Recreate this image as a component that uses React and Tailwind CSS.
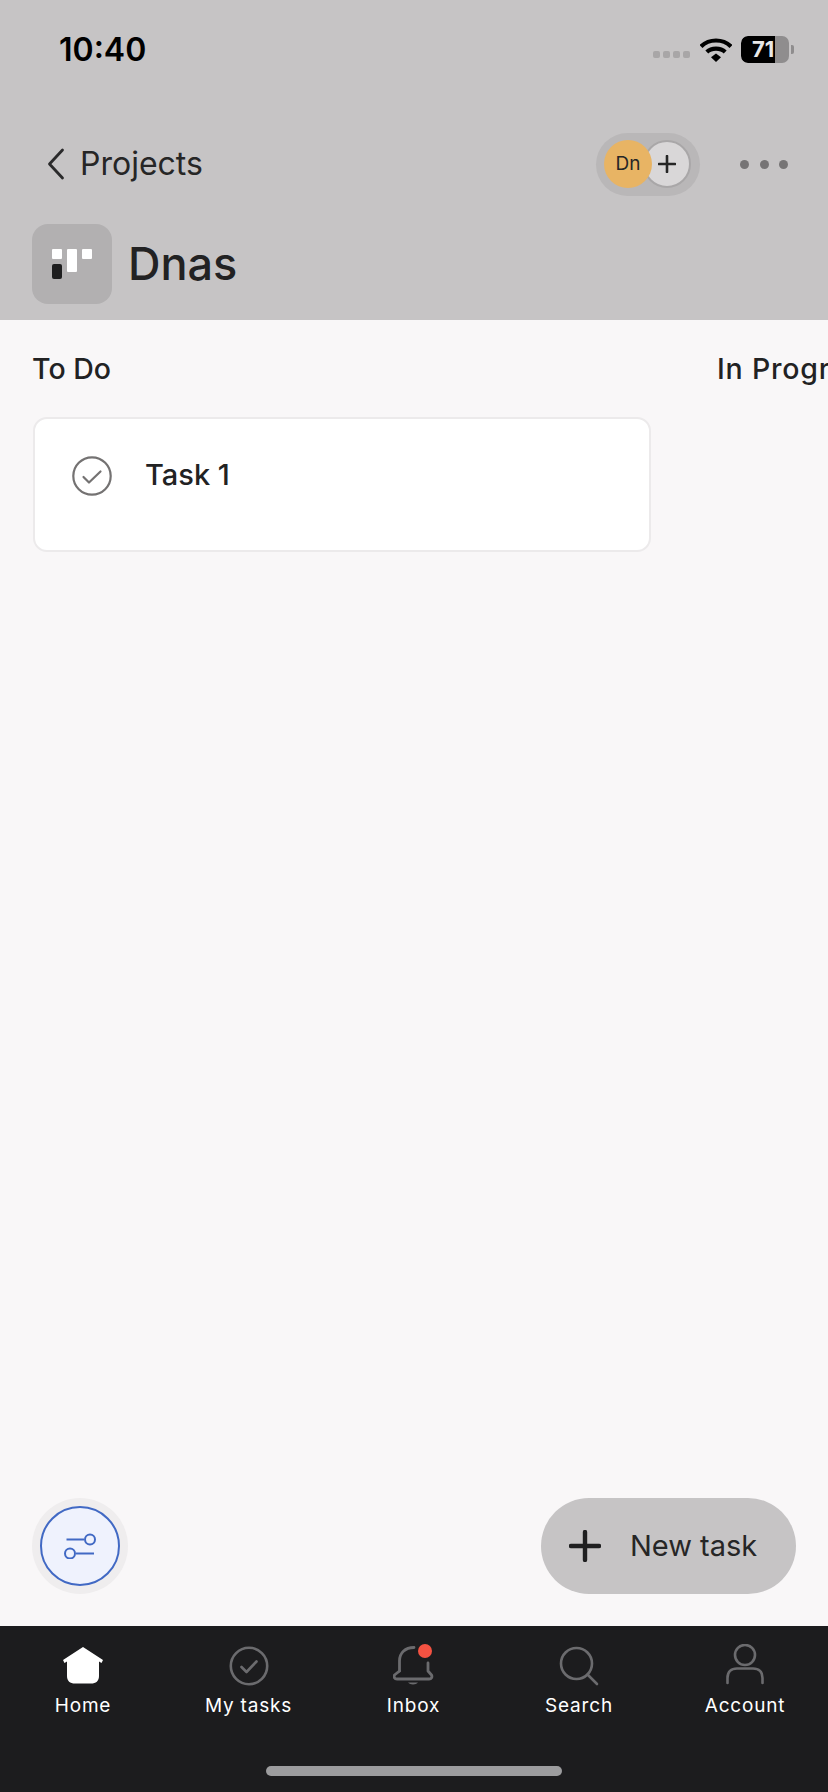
import React from "react";

const font = { fontFamily: "Inter, 'Noto Sans', sans-serif" };

function StatusBar() {
  return (
    <div className="h-[118px] pl-[59px] pr-[34px] flex items-start justify-between">
      <span className="mt-[30px] text-[32px] leading-[40px] font-semibold text-black">10:40</span>
      <div className="mt-[36px] flex items-center">
        <div className="mt-[9px] mr-[10px] flex gap-[3px]">
          <span className="w-[7px] h-[7px] rounded-[2px] bg-[#a8a6a7]" />
          <span className="w-[7px] h-[7px] rounded-[2px] bg-[#a8a6a7]" />
          <span className="w-[7px] h-[7px] rounded-[2px] bg-[#a8a6a7]" />
          <span className="w-[7px] h-[7px] rounded-[2px] bg-[#a8a6a7]" />
        </div>
        <svg width="32" height="26" viewBox="0 0 32 26" className="mr-[9px]">
          <path d="M1 9.5C9 1.5 23 1.5 31 9.5" fill="none" stroke="#000" strokeWidth="4.2" />
          <path d="M6.8 15C11.5 10.5 20.5 10.5 25.2 15" fill="none" stroke="#000" strokeWidth="4.2" />
          <path d="M11 20.2L16 16.5L21 20.2L16 25Z" fill="#000" />
        </svg>
        <div className="relative w-[48px] h-[27px] rounded-[7px] overflow-hidden bg-[#8f8d8e]">
          <div className="w-[34px] h-full bg-black rounded-l-[7px]" />
          <span className="absolute left-[11px] top-0 text-[22px] leading-[27px] font-bold text-[#e8e8e8]">71</span>
        </div>
        <span className="ml-[2px] w-[3px] h-[9px] rounded-r-[2px] bg-[#8f8d8e]" />
      </div>
    </div>
  );
}

function NavRow() {
  return (
    <div className="h-[92px] pl-[47px] pr-[40px] flex items-center justify-between">
      <div className="flex items-center">
        <svg width="18" height="32" viewBox="0 0 18 32" fill="none" className="mr-[15px]">
          <path d="M15.5 2L2.5 16L15.5 30" stroke="#2a2a2b" strokeWidth="2.8" strokeLinecap="round" strokeLinejoin="round" />
        </svg>
        <span className="text-[32px] leading-[40px] text-[#262626]">Projects</span>
      </div>
      <div className="flex items-center gap-[40px]">
        <div className="w-[104px] h-[63px] rounded-full bg-[#b9b7b8] pl-[8px] flex items-center">
          <div className="z-10 w-[48px] h-[48px] rounded-full bg-[#e8b464] flex items-center justify-center text-[19px] text-[#262626]">Dn</div>
          <div className="-ml-[9px] w-[48px] h-[48px] rounded-full bg-[#d9d7d8] border-2 border-[#a9a7a8] flex items-center justify-center">
            <svg width="18" height="18" viewBox="0 0 18 18">
              <path d="M9 1V17M1 9H17" stroke="#262626" strokeWidth="2.6" strokeLinecap="round" />
            </svg>
          </div>
        </div>
        <div className="flex gap-[10.5px]">
          <span className="w-[9px] h-[9px] rounded-full bg-[#767475]" />
          <span className="w-[9px] h-[9px] rounded-full bg-[#767475]" />
          <span className="w-[9px] h-[9px] rounded-full bg-[#767475]" />
        </div>
      </div>
    </div>
  );
}

function TitleRow() {
  return (
    <div className="h-[110px] pl-[32px] pt-[14px] flex items-start">
      <div className="w-[80px] h-[80px] rounded-[16px] bg-[#b2b0b1] flex items-center justify-center">
        <svg width="42" height="32" viewBox="0 0 42 32">
          <rect x="1" y="1" width="10" height="10" rx="1" fill="#fff" />
          <rect x="16" y="1" width="10" height="23" rx="1" fill="#fff" />
          <rect x="31" y="1" width="10" height="10" rx="1" fill="#fff" />
          <rect x="1" y="16" width="10" height="15" rx="2" fill="#1e1e1f" />
        </svg>
      </div>
      <span className="ml-[16px] mt-[12px] text-[45px] leading-[56px] font-medium text-[#222223]">Dnas</span>
    </div>
  );
}

function Board() {
  return (
    <div className="flex-1 min-h-0 overflow-hidden relative bg-[#f9f7f8] pl-[33px] pt-[34px]">
      <div className="flex gap-[66px] w-[1400px]">
        <div className="w-[618px] shrink-0">
          <div className="h-[30px] -ml-px text-[28.5px] leading-[30px] font-medium text-[#222223]">To Do</div>
          <div className="mt-[33px] h-[135px] rounded-[14px] bg-white border-2 border-[#eceaeb] pl-[37px] pt-[37px] flex items-start">
            <svg width="40" height="40" viewBox="0 0 40 40" fill="none">
              <circle cx="20" cy="20" r="18.7" stroke="#747272" strokeWidth="2.2" />
              <path d="M11.5 21L17 26.5L28.5 15.5" stroke="#747272" strokeWidth="2.2" strokeLinecap="round" strokeLinejoin="round" />
            </svg>
            <span className="ml-[33px] text-[29px] leading-[38px] font-medium text-[#222223]">Task 1</span>
          </div>
        </div>
        <div className="w-[618px] shrink-0">
          <div className="h-[30px] whitespace-nowrap text-[28.5px] leading-[30px] tracking-[0.8px] font-medium text-[#222223]">In Progress</div>
        </div>
      </div>

      <div className="absolute left-[32px] bottom-[32px] w-[96px] h-[96px] rounded-full bg-[#efedee] flex items-center justify-center">
        <div className="w-[80px] h-[80px] rounded-full bg-[#eff2fd] border-2 border-[#4169c4] flex items-center justify-center">
          <svg width="34" height="26" viewBox="0 0 34 26" fill="none" stroke="#4169c4" strokeWidth="2">
            <path d="M3.5 6.5H21" />
            <circle cx="27" cy="6.5" r="5" />
            <path d="M31 20.5H13" />
            <circle cx="7" cy="20.5" r="5" />
          </svg>
        </div>
      </div>

      <div className="absolute right-[32px] bottom-[32px] w-[255px] h-[96px] rounded-full bg-[#c6c4c5] pl-[28px] flex items-center">
        <svg width="32" height="32" viewBox="0 0 32 32">
          <path d="M16 2V30M2 16H30" stroke="#1f1f20" strokeWidth="4.4" strokeLinecap="round" />
        </svg>
        <span className="ml-[29px] text-[29px] leading-[40px] text-[#262626]">New task</span>
      </div>
    </div>
  );
}

const tabStroke = "#6b6b6e";

const tabs = [
  {
    label: "Home",
    icon: (
      <svg width="40" height="38" viewBox="0 0 40 38" className="mb-[2px]">
        <path d="M20 1L40 14L38.5 17L36 15.5V30C36 35 33 37.5 28 37.5H12C7 37.5 4 35 4 30V15.5L1.5 17L0 14Z" fill="#fff" />
      </svg>
    ),
  },
  {
    label: "My tasks",
    icon: (
      <svg width="40" height="40" viewBox="0 0 40 40" fill="none">
        <circle cx="20" cy="20" r="18.2" stroke={tabStroke} strokeWidth="2.6" />
        <path d="M12.5 21L17.5 26L27.5 15.5" stroke={tabStroke} strokeWidth="2.6" strokeLinecap="round" strokeLinejoin="round" />
      </svg>
    ),
  },
  {
    label: "Inbox",
    icon: (
      <span className="relative block w-[42px] h-[42px]">
        <svg width="42" height="42" viewBox="0 0 42 42" fill="none">
          <path d="M6.5 27V17C6.5 9 12 3.5 21 3.5" stroke={tabStroke} strokeWidth="2.8" strokeLinecap="round" />
          <path d="M35 19V27L38.5 31C39.5 33 38.5 35 36 35H4C1.5 35 .5 33 1.5 31L6.5 27" stroke={tabStroke} strokeWidth="2.8" strokeLinecap="round" strokeLinejoin="round" />
          <path d="M15 38.5C17 41 23 41 25 38.5Z" fill={tabStroke} />
        </svg>
        <span className="absolute left-[25px] top-0 w-[14px] h-[14px] rounded-full bg-[#f45242]" />
      </span>
    ),
  },
  {
    label: "Search",
    icon: (
      <svg width="40" height="40" viewBox="0 0 40 40" fill="none">
        <circle cx="17.5" cy="17.5" r="15.5" stroke={tabStroke} strokeWidth="2.6" />
        <path d="M28.5 28.5L38 38" stroke={tabStroke} strokeWidth="2.6" strokeLinecap="round" />
      </svg>
    ),
  },
  {
    label: "Account",
    icon: (
      <svg width="40" height="42" viewBox="0 0 40 42" fill="none">
        <circle cx="20" cy="11" r="10" stroke={tabStroke} strokeWidth="2.6" />
        <path d="M2.5 39V34C2.5 28 6 24.5 12 24.5H28C34 24.5 37.5 28 37.5 34V39" stroke={tabStroke} strokeWidth="2.6" strokeLinecap="round" />
      </svg>
    ),
  },
];

function TabBar() {
  return (
    <div className="h-[166px] shrink-0 bg-[#1c1c1e] flex flex-col items-center">
      <div className="w-full h-[140px] grid grid-cols-[166px_165px_165px_166px_166px]">
        {tabs.map((t) => (
          <div key={t.label} className="pt-[18px] flex flex-col items-center">
            <div className="h-[42px] flex items-end">{t.icon}</div>
            <span className="mt-[8px] text-[19px] leading-[24px] font-normal tracking-[0.8px] text-white">{t.label}</span>
          </div>
        ))}
      </div>
      <div className="w-[296px] h-[10px] rounded-full bg-[#9c9c9e]" />
    </div>
  );
}

export default function App() {
  return (
    <div className="w-[828px] h-[1792px] flex flex-col overflow-hidden" style={font}>
      <div className="h-[320px] shrink-0 bg-[#c6c4c5]">
        <StatusBar />
        <NavRow />
        <TitleRow />
      </div>
      <Board />
      <TabBar />
    </div>
  );
}
